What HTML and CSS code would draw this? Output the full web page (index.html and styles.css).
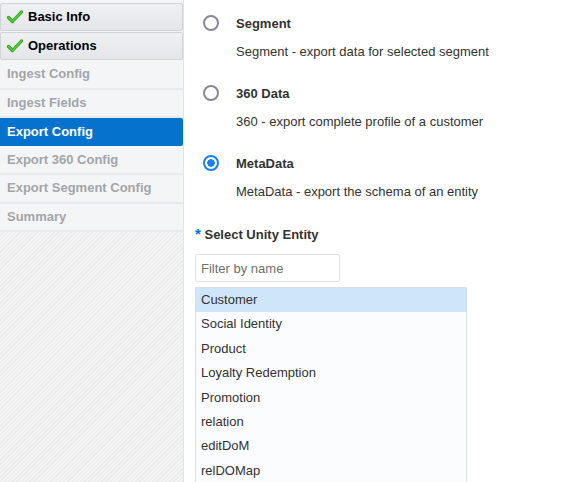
FILE: index.html
```html
<!DOCTYPE html>
<html lang="en">
<head>
    <meta charset="UTF-8">
    <title>Export Config</title>
    <link rel="stylesheet" href="styles.css">
</head>
<body>
    <div class="train">
        <div class="step done">
            <svg class="check" width="16" height="14" viewBox="0 0 16 14"><path d="M1.5 7.5 L5.5 11.5 L14.5 2" fill="none" stroke="#2f9e1f" stroke-width="3.2" stroke-linecap="round" stroke-linejoin="round"/><path d="M1.5 7.5 L5.5 11.5 L14.5 2" fill="none" stroke="#5ad13a" stroke-width="1.4" stroke-linecap="round" stroke-linejoin="round"/></svg>
            Basic Info
        </div>
        <div class="step done">
            <svg class="check" width="16" height="14" viewBox="0 0 16 14"><path d="M1.5 7.5 L5.5 11.5 L14.5 2" fill="none" stroke="#2f9e1f" stroke-width="3.2" stroke-linecap="round" stroke-linejoin="round"/><path d="M1.5 7.5 L5.5 11.5 L14.5 2" fill="none" stroke="#5ad13a" stroke-width="1.4" stroke-linecap="round" stroke-linejoin="round"/></svg>
            Operations
        </div>
        <div class="step">Ingest Config</div>
        <div class="step">Ingest Fields</div>
        <div class="step current">Export Config</div>
        <div class="step">Export 360 Config</div>
        <div class="step">Export Segment Config</div>
        <div class="step">Summary</div>
        <div class="train-fill"></div>
    </div>

    <div class="content">
        <div class="option">
            <span class="radio"></span>
            <div>
                <div class="option-title">Segment</div>
                <div class="option-desc">Segment - export data for selected segment</div>
            </div>
        </div>
        <div class="option">
            <span class="radio"></span>
            <div>
                <div class="option-title">360 Data</div>
                <div class="option-desc">360 - export complete profile of a customer</div>
            </div>
        </div>
        <div class="option">
            <span class="radio checked"></span>
            <div>
                <div class="option-title">MetaData</div>
                <div class="option-desc">MetaData - export the schema of an entity</div>
            </div>
        </div>

        <div class="field-label"><span class="req">*</span> Select Unity Entity</div>
        <input class="filter" type="text" placeholder="Filter by name">
        <ul class="listbox">
            <li class="selected">Customer</li>
            <li>Social Identity</li>
            <li>Product</li>
            <li>Loyalty Redemption</li>
            <li>Promotion</li>
            <li>relation</li>
            <li>editDoM</li>
            <li>relDOMap</li>
        </ul>
    </div>
</body>
</html>
```

FILE: styles.css
```css
body {
    margin: 0;
    font-family: "Liberation Sans", Arial, sans-serif;
    font-size: 13px;
    color: #333;
    background: #fff;
    display: flex;
    height: 482px;
    overflow: hidden;
}
.train {
    width: 183px;
    flex-shrink: 0;
    border-right: 1px solid #dfe4ea;
    background: #f4f5f7;
    padding-top: 3px;
    display: flex;
    flex-direction: column;
}
.step {
    flex-shrink: 0;
    height: 26.5px;
    line-height: 26px;
    padding-left: 7px;
    font-weight: bold;
    color: #a3a5a8;
    background: #f4f5f7;
    border-bottom: 2px solid #e7eaef;
    display: flex;
    align-items: center;
    gap: 5px;
}
.step.done {
    color: #000;
    height: 26px;
    background: linear-gradient(#eef0f2, #e4e6e9);
    border: 1px solid #cfd3d8;
    border-radius: 2px;
    margin-bottom: 1px;
    padding-left: 6px;
}
.step.current {
    color: #fff;
    background: #0572ce;
    border-radius: 0 2px 2px 0;
    height: 28px;
    margin-bottom: 0.5px;
    border-bottom: 0;
}
.check {
    flex-shrink: 0;
}
.train-fill {
    flex: 1;
    background: repeating-linear-gradient(135deg, #f3f3f3 0 2px, #ebebeb 2px 3px);
}
.content {
    padding: 11px 0 0 11px;
}
.option {
    display: flex;
    align-items: flex-start;
    height: 70px;
}
.radio {
    width: 12px;
    height: 12px;
    border: 2px solid #8a8894;
    border-radius: 50%;
    margin: 4px 17px 0 8px;
    flex-shrink: 0;
}
.radio.checked {
    border-color: #1a7ff0;
    background: radial-gradient(circle, #1a7ff0 0 3.5px, #fff 4px);
}
.option-title {
    font-weight: bold;
    line-height: 26px;
}
.option-desc {
    line-height: 29px;
}
.field-label {
    font-weight: bold;
    line-height: 26px;
}
.req {
    color: #0572ce;
    font-size: 15px;
}
.filter {
    display: block;
    box-sizing: border-box;
    width: 145px;
    height: 28px;
    margin-top: 6px;
    border: 1px solid #dfe1e4;
    border-radius: 2px;
    padding: 0 5px;
    font-family: inherit;
    font-size: 13px;
    color: #333;
}
.filter::placeholder {
    color: #6f6f6f;
}
.listbox {
    list-style: none;
    margin: 5px 0 0;
    padding: 0;
    width: 270px;
    border: 1px solid #dcdee2;
    background: #fbfcfe;
}
.listbox li {
    height: 24.4px;
    line-height: 23px;
    padding-left: 5px;
}
.listbox li.selected {
    background: #cde6fa;
}
```
